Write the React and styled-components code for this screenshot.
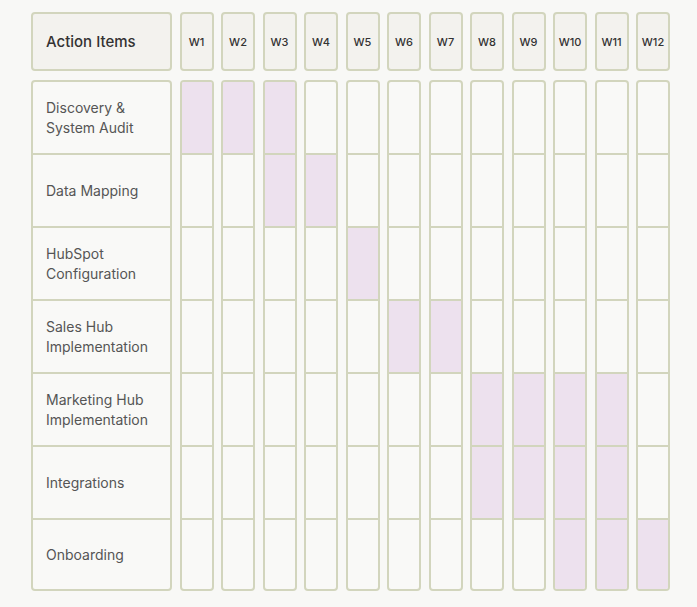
import React from "react";
import styled, { createGlobalStyle } from "styled-components";

const GlobalStyle = createGlobalStyle`
    body {
        margin: 0;
        background: #f8f8f6;
        font-family: Inter, "Noto Sans", sans-serif;
    }
`;

const Page = styled.div`
    padding: 12px 0 0 31px;
`;

const Grid = styled.div`
    display: grid;
    grid-template-columns: 141px repeat(12, 34px);
    column-gap: 7.5px;
    row-gap: 9px;
    width: 639px;
`;

const HeadCell = styled.div`
    height: 59px;
    box-sizing: border-box;
    border: 2px solid #d2d5bd;
    border-radius: 4px;
    background: #f3f2ee;
    display: flex;
    align-items: center;
    justify-content: ${({wide}) => wide ? "flex-start" : "center"};
    padding-left: ${({wide}) => wide ? "13px" : "0"};
    color: #333;
    font-size: ${({wide}) => wide ? "15px" : "11px"};
    font-weight: 500;
`;

const Column = styled.div`
    box-sizing: border-box;
    border: 2px solid #d2d5bd;
    border-radius: 4px;
    background: #f9f9f7;
    display: flex;
    flex-direction: column;
    overflow: hidden;
`;

const Cell = styled.div`
    height: 73px;
    box-sizing: border-box;
    background: ${({on}) => on ? "#ede1ee" : "transparent"};
    border-top: ${({first}) => first ? "none" : "2px solid #d2d5bd"};
    &:first-child { height: 71px; }
    &:last-child { height: 71px; }
`;

const Label = styled(Cell)`
    display: flex;
    align-items: center;
    padding: 0 13px;
    font-size: 14px;
    line-height: 20px;
    color: #555;
`;

const rows = [
    ["Discovery &", "System Audit"],
    ["Data Mapping"],
    ["HubSpot", "Configuration"],
    ["Sales Hub", "Implementation"],
    ["Marketing Hub", "Implementation"],
    ["Integrations"],
    ["Onboarding"],
];

const active = [
    [1, 2, 3],
    [3, 4],
    [5],
    [6, 7],
    [8, 9, 10, 11],
    [8, 9, 10, 11],
    [10, 11, 12],
];

const weeks = Array.from({length: 12}, (_, i) => i + 1);

export default function App() {
    return (
        <Page>
            <GlobalStyle />
            <Grid>
                <HeadCell wide>Action Items</HeadCell>
                {weeks.map(w => <HeadCell key={w}>W{w}</HeadCell>)}
                <Column>
                    {rows.map((lines, i) => (
                        <Label key={i} first={i === 0}>
                            <div>{lines.map((l, j) => <div key={j}>{l}</div>)}</div>
                        </Label>
                    ))}
                </Column>
                {weeks.map(w => (
                    <Column key={w}>
                        {active.map((a, i) => (
                            <Cell key={i} first={i === 0} on={a.includes(w)} />
                        ))}
                    </Column>
                ))}
            </Grid>
        </Page>
    );
}
